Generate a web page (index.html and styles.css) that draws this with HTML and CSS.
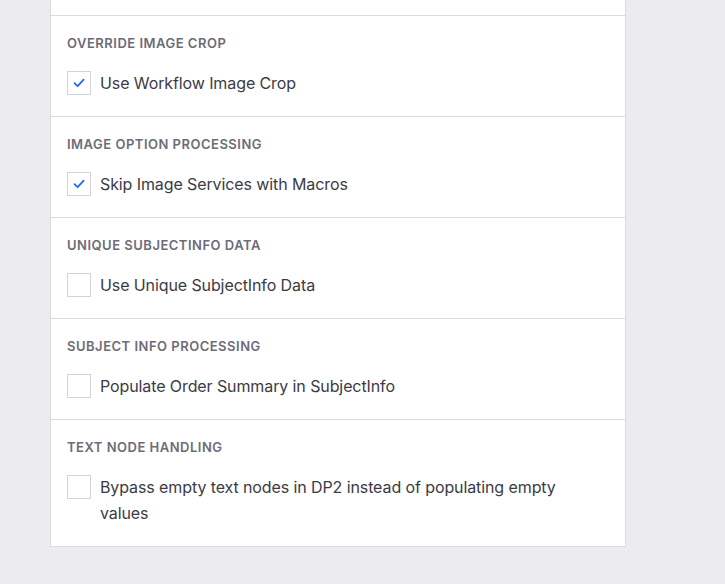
FILE: index.html
```html
<!DOCTYPE html>
<html lang="en">
<head>
    <meta charset="UTF-8">
    <meta name="viewport" content="width=device-width, initial-scale=1.0">
    <title>Processing Options</title>
    <link rel="stylesheet" href="styles.css">
</head>
<body>
    <div class="card">
        <!-- konec predchozi sekce (oriznuto nahore) -->
        <div class="section section-cut"></div>

        <div class="section">
            <h3 class="section-title">Override Image Crop</h3>
            <label class="option">
                <span class="box checked"><svg viewBox="0 0 14 14"><path d="M2.5 7.2 L5.6 10.2 L11.6 3.6"/></svg></span>
                <span class="option-text">Use Workflow Image Crop</span>
            </label>
        </div>

        <div class="section">
            <h3 class="section-title">Image Option Processing</h3>
            <label class="option">
                <span class="box checked"><svg viewBox="0 0 14 14"><path d="M2.5 7.2 L5.6 10.2 L11.6 3.6"/></svg></span>
                <span class="option-text">Skip Image Services with Macros</span>
            </label>
        </div>

        <div class="section">
            <h3 class="section-title">Unique SubjectInfo Data</h3>
            <label class="option">
                <span class="box"></span>
                <span class="option-text">Use Unique SubjectInfo Data</span>
            </label>
        </div>

        <div class="section">
            <h3 class="section-title">Subject Info Processing</h3>
            <label class="option">
                <span class="box"></span>
                <span class="option-text">Populate Order Summary in SubjectInfo</span>
            </label>
        </div>

        <div class="section">
            <h3 class="section-title">Text Node Handling</h3>
            <label class="option">
                <span class="box"></span>
                <span class="option-text">Bypass empty text nodes in DP2 instead of populating empty values</span>
            </label>
        </div>
    </div>
</body>
</html>
```

FILE: styles.css
```css
body {
    font-family: Inter, "Noto Sans", sans-serif;
    background-color: #ececef;
    margin: 0;
    padding: 0 0 40px 50px;
}

.card {
    width: 574px;
    background-color: #ffffff;
    border: 1px solid #dcdcdf;
    border-top: none;
}

.section {
    padding: 19px 16px 20px 16px;
    border-top: 1px solid #dcdcdf;
}

.section-cut {
    border-top: none;
    padding: 0;
    height: 15px;
}

.section-title {
    margin: 0 0 19px 0;
    font-size: 13px;
    line-height: 16px;
    font-weight: 600;
    letter-spacing: 0.5px;
    text-transform: uppercase;
    color: #6c6c78;
}

.option {
    display: flex;
    align-items: flex-start;
    gap: 9px;
    padding-right: 44px;
    cursor: pointer;
}

.box {
    flex: 0 0 auto;
    width: 22px;
    height: 22px;
    margin-top: 1px;
    border: 1px solid #d4d4d8;
    background-color: #ffffff;
    display: flex;
    align-items: center;
    justify-content: center;
}

.box svg {
    width: 14px;
    height: 14px;
    fill: none;
    stroke: #1f6bf0;
    stroke-width: 1.8;
    stroke-linecap: round;
    stroke-linejoin: round;
}

.option-text {
    font-size: 16px;
    line-height: 26px;
    letter-spacing: -0.1px;
    color: #3b3b45;
}
```
